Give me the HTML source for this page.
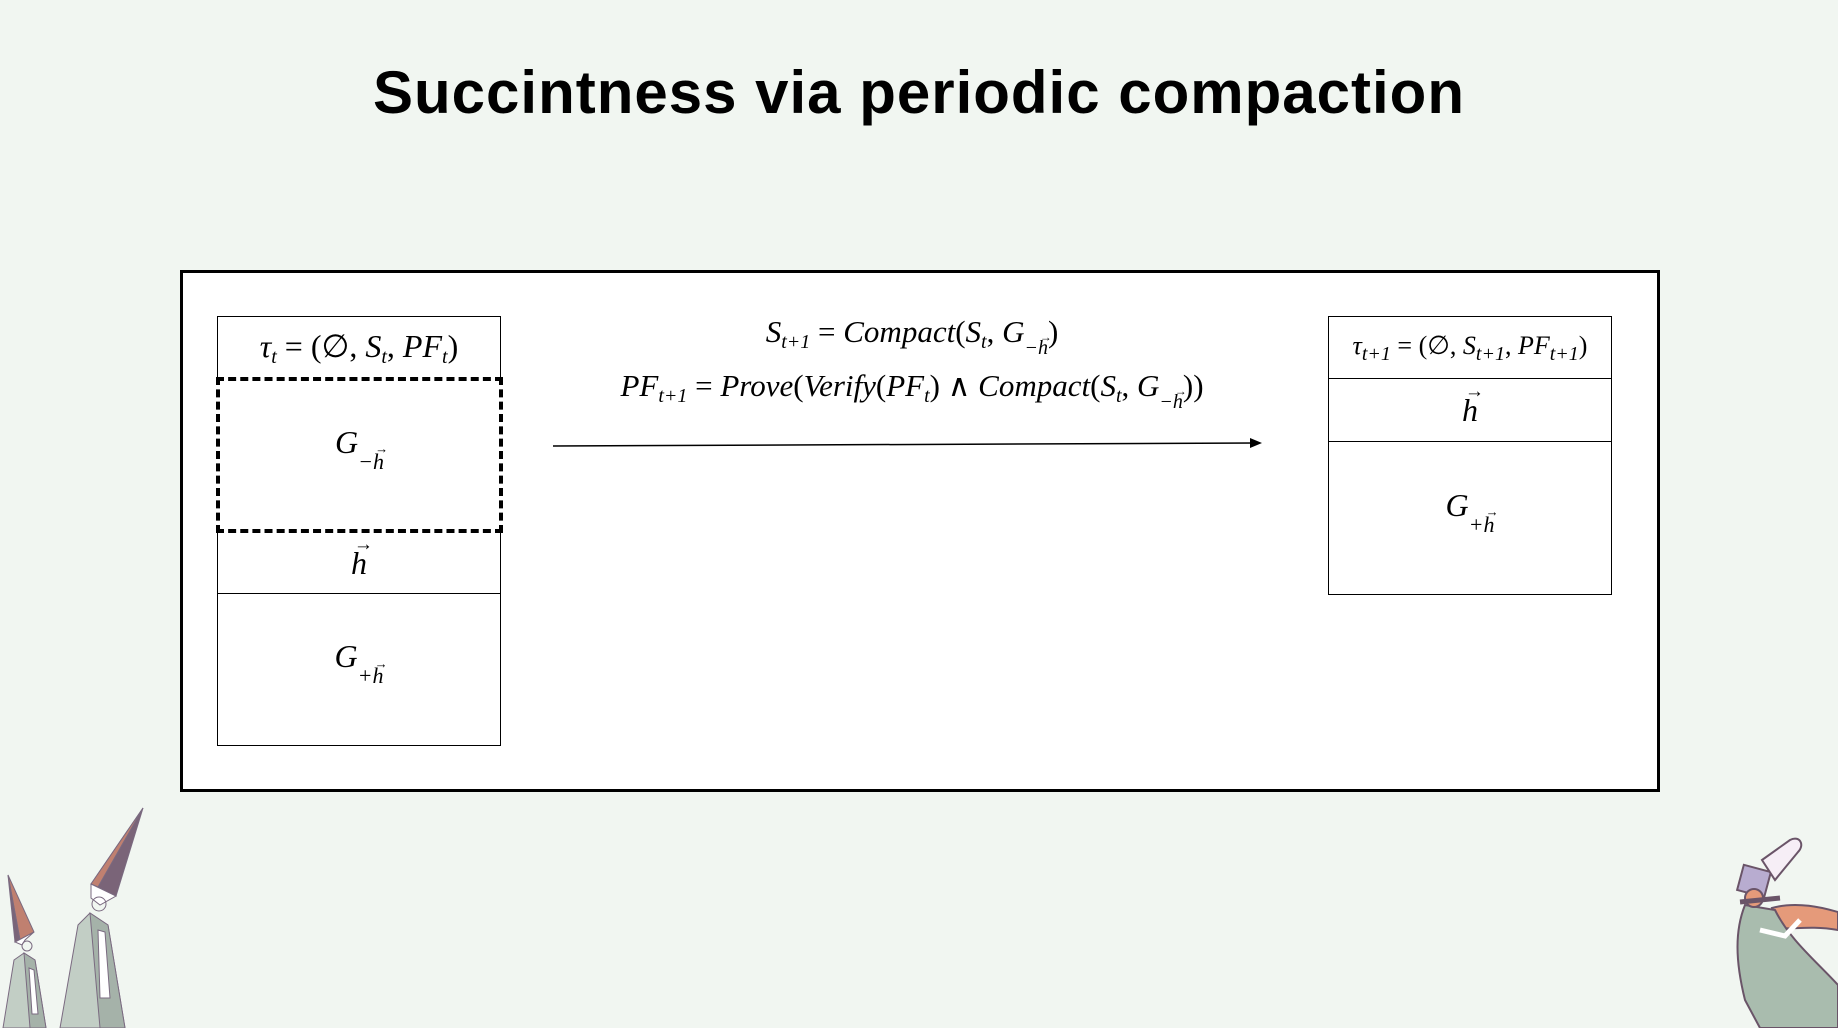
<!DOCTYPE html>
<html><head><meta charset="utf-8"><style>
body{margin:0;width:1838px;height:1028px;background:#f1f6f1;position:relative;overflow:hidden;font-family:"Liberation Serif",serif}
.title{position:absolute;top:58px;left:0;width:1838px;text-align:center;font:bold 60px "Liberation Sans",sans-serif;color:#000;letter-spacing:1px}
.frame{position:absolute;left:180px;top:270px;width:1474px;height:516px;border:3px solid #000;background:#fff}
.b{position:absolute;border:1.5px solid #000;box-sizing:border-box;display:flex;align-items:center;justify-content:center;font-style:italic;font-size:32px;background:#fff}
.d{border:4px dashed #000}
sub{font-size:20px;font-style:italic;vertical-align:-6px}
.m{position:absolute;font-style:italic;font-size:31px;white-space:nowrap;text-align:center}
.u{font-style:normal}
.h{position:relative;display:inline-block}
.h::before{content:"→";position:absolute;left:0.15em;top:-0.55em;font-size:0.6em;font-style:normal}
.g{display:inline-block;position:relative;top:-6px}
.g sub{font-size:22px;vertical-align:-16px}
</style></head><body>
<div class="title">Succintness via periodic compaction</div>
<div class="frame"></div>
<div class="b" style="left:217px;top:316px;width:284px;height:64px"><span>τ<sub>t</sub> <span class="u">= (∅,</span> S<sub>t</sub><span class="u">,</span> PF<sub>t</sub><span class="u">)</span></span></div>
<div class="b" style="left:217px;top:531px;width:284px;height:64px"><span class="h">h</span></div>
<div class="b" style="left:217px;top:593px;width:284px;height:153px"><span class="g">G<sub>+<span class="h">h</span></sub></span></div>
<div class="b d" style="left:216px;top:377px;width:287px;height:156px"><span class="g">G<sub>−<span class="h">h</span></sub></span></div>
<div class="b" style="left:1328px;top:316px;width:284px;height:64px;font-size:26px"><span>τ<sub>t+1</sub> <span class="u">= (∅,</span> S<sub>t+1</sub><span class="u">,</span> PF<sub>t+1</sub><span class="u">)</span></span></div>
<div class="b" style="left:1328px;top:378px;width:284px;height:65px"><span class="h">h</span></div>
<div class="b" style="left:1328px;top:441px;width:284px;height:154px"><span class="g">G<sub>+<span class="h">h</span></sub></span></div>
<div class="m" style="left:600px;width:624px;top:314px">S<sub>t+1</sub> <span class="u">=</span> Compact<span class="u">(</span>S<sub>t</sub><span class="u">,</span> G<sub style="vertical-align:-12px">−<span class="h">h</span></sub><span class="u">)</span></div>
<div class="m" style="left:560px;width:704px;top:368px">PF<sub>t+1</sub> <span class="u">=</span> Prove<span class="u">(</span>Verify<span class="u">(</span>PF<sub>t</sub><span class="u">) ∧</span> Compact<span class="u">(</span>S<sub>t</sub><span class="u">,</span> G<sub style="vertical-align:-12px">−<span class="h">h</span></sub><span class="u">))</span></div>
<svg style="position:absolute;left:0;top:0" width="1838" height="1028">
<line x1="553" y1="446" x2="1255" y2="443" stroke="#000" stroke-width="1.5"/>
<polygon points="1262,443 1250,438 1250,448" fill="#000"/>
<g stroke="#7a6a80" stroke-width="1">
<polygon points="143,808 91,884 116,896" fill="#7a6478"/>
<polygon points="143,808 91,884 98,887" fill="#c08070"/>
<polygon points="91,884 116,896 100,905 91,898" fill="#fff"/>
<circle cx="99" cy="904" r="7" fill="none"/>
<polygon points="90,913 78,925 60,1028 125,1028 108,925" fill="#c2cec5"/>
<polygon points="90,913 108,925 125,1028 100,1028" fill="#a5b2a9"/>
<polygon points="98,930 105,932 110,998 100,998" fill="#fff"/>
<polygon points="8,875 34,932 20,940" fill="#c08070"/>
<polygon points="8,875 20,940 15,942" fill="#7a6478"/>
<polygon points="15,942 34,932 25,940 22,945" fill="#fff"/>
<circle cx="27" cy="946" r="5" fill="none"/>
<polygon points="24,953 14,960 3,1028 46,1028 35,960" fill="#c2cec5"/>
<polygon points="24,953 35,960 46,1028 30,1028" fill="#a5b2a9"/>
<polygon points="29,968 34,970 38,1014 32,1014" fill="#fff"/>
</g>
<g stroke="#6a5468" stroke-width="2">
<path d="M1772,908 C1800,900 1830,910 1838,912 L1838,930 C1810,925 1790,930 1780,928 Z" fill="#e59a7a"/>
<path d="M1745,905 C1735,930 1735,960 1745,1000 L1760,1028 L1838,1028 L1838,985 C1815,960 1790,940 1775,910 Z" fill="#a9bcae"/>
<path d="M1760,930 L1785,936 L1800,920" fill="none" stroke="#fff" stroke-width="5"/>
<rect x="1740" y="868" width="28" height="26" fill="#b8acd0" transform="rotate(15 1754 881)"/>
<path d="M1762,860 L1790,840 C1800,835 1805,845 1798,852 L1775,880 Z" fill="#f6eef6"/>
<circle cx="1754" cy="898" r="9" fill="#e59a7a"/>
<path d="M1740,902 L1780,898" stroke-width="5"/>
</g>
</svg>
</body></html>
